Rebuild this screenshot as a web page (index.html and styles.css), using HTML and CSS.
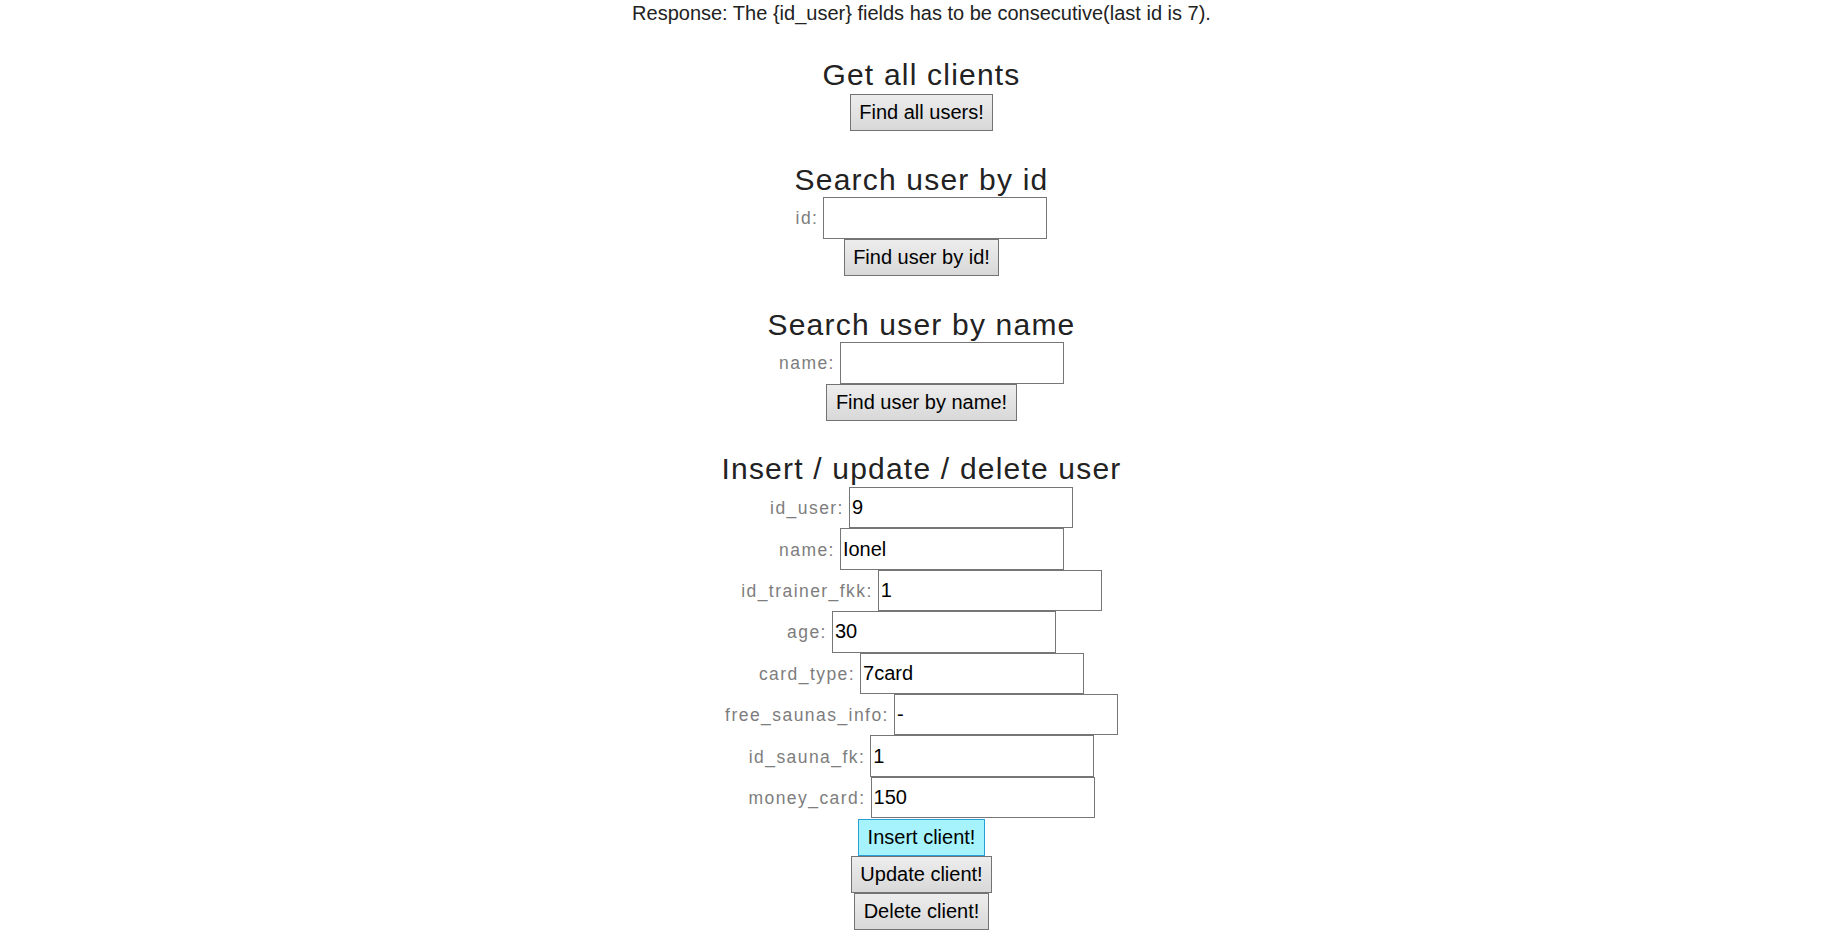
FILE: index.html
```html
<!DOCTYPE html>
<html lang="en">
<head>
<meta charset="utf-8">
<title>Clients</title>
<link rel="stylesheet" href="styles.css">
</head>
<body>
<div class="page">
  <p class="response">Response: The {id_user} fields has to be consecutive(last id is 7).</p>

  <section class="block">
    <h2 class="title">Get all clients</h2>
    <button class="btn" type="button">Find all users!</button>
  </section>

  <section class="block">
    <h2 class="title">Search user by id</h2>
    <div class="field"><label class="label" for="sid">id:</label><input class="input" id="sid" type="text"></div>
    <button class="btn" type="button">Find user by id!</button>
  </section>

  <section class="block">
    <h2 class="title">Search user by name</h2>
    <div class="field"><label class="label" for="sname">name:</label><input class="input" id="sname" type="text"></div>
    <button class="btn" type="button">Find user by name!</button>
  </section>

  <section class="block">
    <h2 class="title">Insert / update / delete user</h2>
    <div class="field"><label class="label" for="f1">id_user:</label><input class="input" id="f1" type="text" value="9"></div>
    <div class="field"><label class="label" for="f2">name:</label><input class="input" id="f2" type="text" value="Ionel"></div>
    <div class="field"><label class="label" for="f3">id_trainer_fkk:</label><input class="input" id="f3" type="text" value="1"></div>
    <div class="field"><label class="label" for="f4">age:</label><input class="input" id="f4" type="text" value="30"></div>
    <div class="field"><label class="label" for="f5">card_type:</label><input class="input" id="f5" type="text" value="7card"></div>
    <div class="field"><label class="label" for="f6">free_saunas_info:</label><input class="input" id="f6" type="text" value="-"></div>
    <div class="field"><label class="label" for="f7">id_sauna_fk:</label><input class="input" id="f7" type="text" value="1"></div>
    <div class="field"><label class="label" for="f8">money_card:</label><input class="input" id="f8" type="text" value="150"></div>
    <div class="actions">
      <button class="btn btn-active" type="button">Insert client!</button>
      <button class="btn" type="button">Update client!</button>
      <button class="btn" type="button">Delete client!</button>
    </div>
  </section>
</div>
</body>
</html>
```

FILE: styles.css
```css
html, body {
  margin: 0;
  padding: 0;
  background: #ffffff;
}

body {
  font-family: "Liberation Sans", Arial, sans-serif;
  font-size: 20px;
  color: #222222;
}

.page {
  padding: 2px 0 0 6px;
  text-align: center;
}

.response {
  margin: 0;
  line-height: 23px;
  color: #222222;
}

.block {
  display: flex;
  flex-direction: column;
  align-items: center;
}

.title {
  margin: 31.3px 0 0.6px;
  font-size: 30px;
  line-height: 34px;
  font-weight: normal;
  letter-spacing: 1.2px;
  color: #222222;
}

.block:first-of-type .title {
  margin-top: 33px;
  margin-bottom: 1.8px;
}

.field {
  display: flex;
  justify-content: center;
  align-items: baseline;
  gap: 5px;
}

.label {
  font-size: 17.5px;
  letter-spacing: 1.45px;
  color: #7d7d7d;
}

.input {
  box-sizing: border-box;
  width: 224px;
  height: 41.4px;
  margin: 0;
  padding: 0 2px;
  border: 1px solid #767676;
  border-radius: 0;
  background: #ffffff;
  font-family: "Liberation Sans", Arial, sans-serif;
  font-size: 20px;
  color: #000000;
  outline: none;
}

.btn {
  box-sizing: border-box;
  height: 37px;
  margin: 0;
  padding: 0 8.6px;
  border: 1px solid #737373;
  border-radius: 0;
  background: linear-gradient(#ededed, #d8d8d8);
  font-family: "Liberation Sans", Arial, sans-serif;
  font-size: 20px;
  line-height: 23px;
  color: #000000;
  cursor: pointer;
}

.block .btn {
  margin-top: 0.6px;
}

.actions {
  display: flex;
  flex-direction: column;
  align-items: center;
  margin-top: 0.8px;
}

.actions .btn {
  margin-top: 0;
}

.btn-active {
  background: #a6f3fd;
  border-color: #2a9fd6;
}
```
